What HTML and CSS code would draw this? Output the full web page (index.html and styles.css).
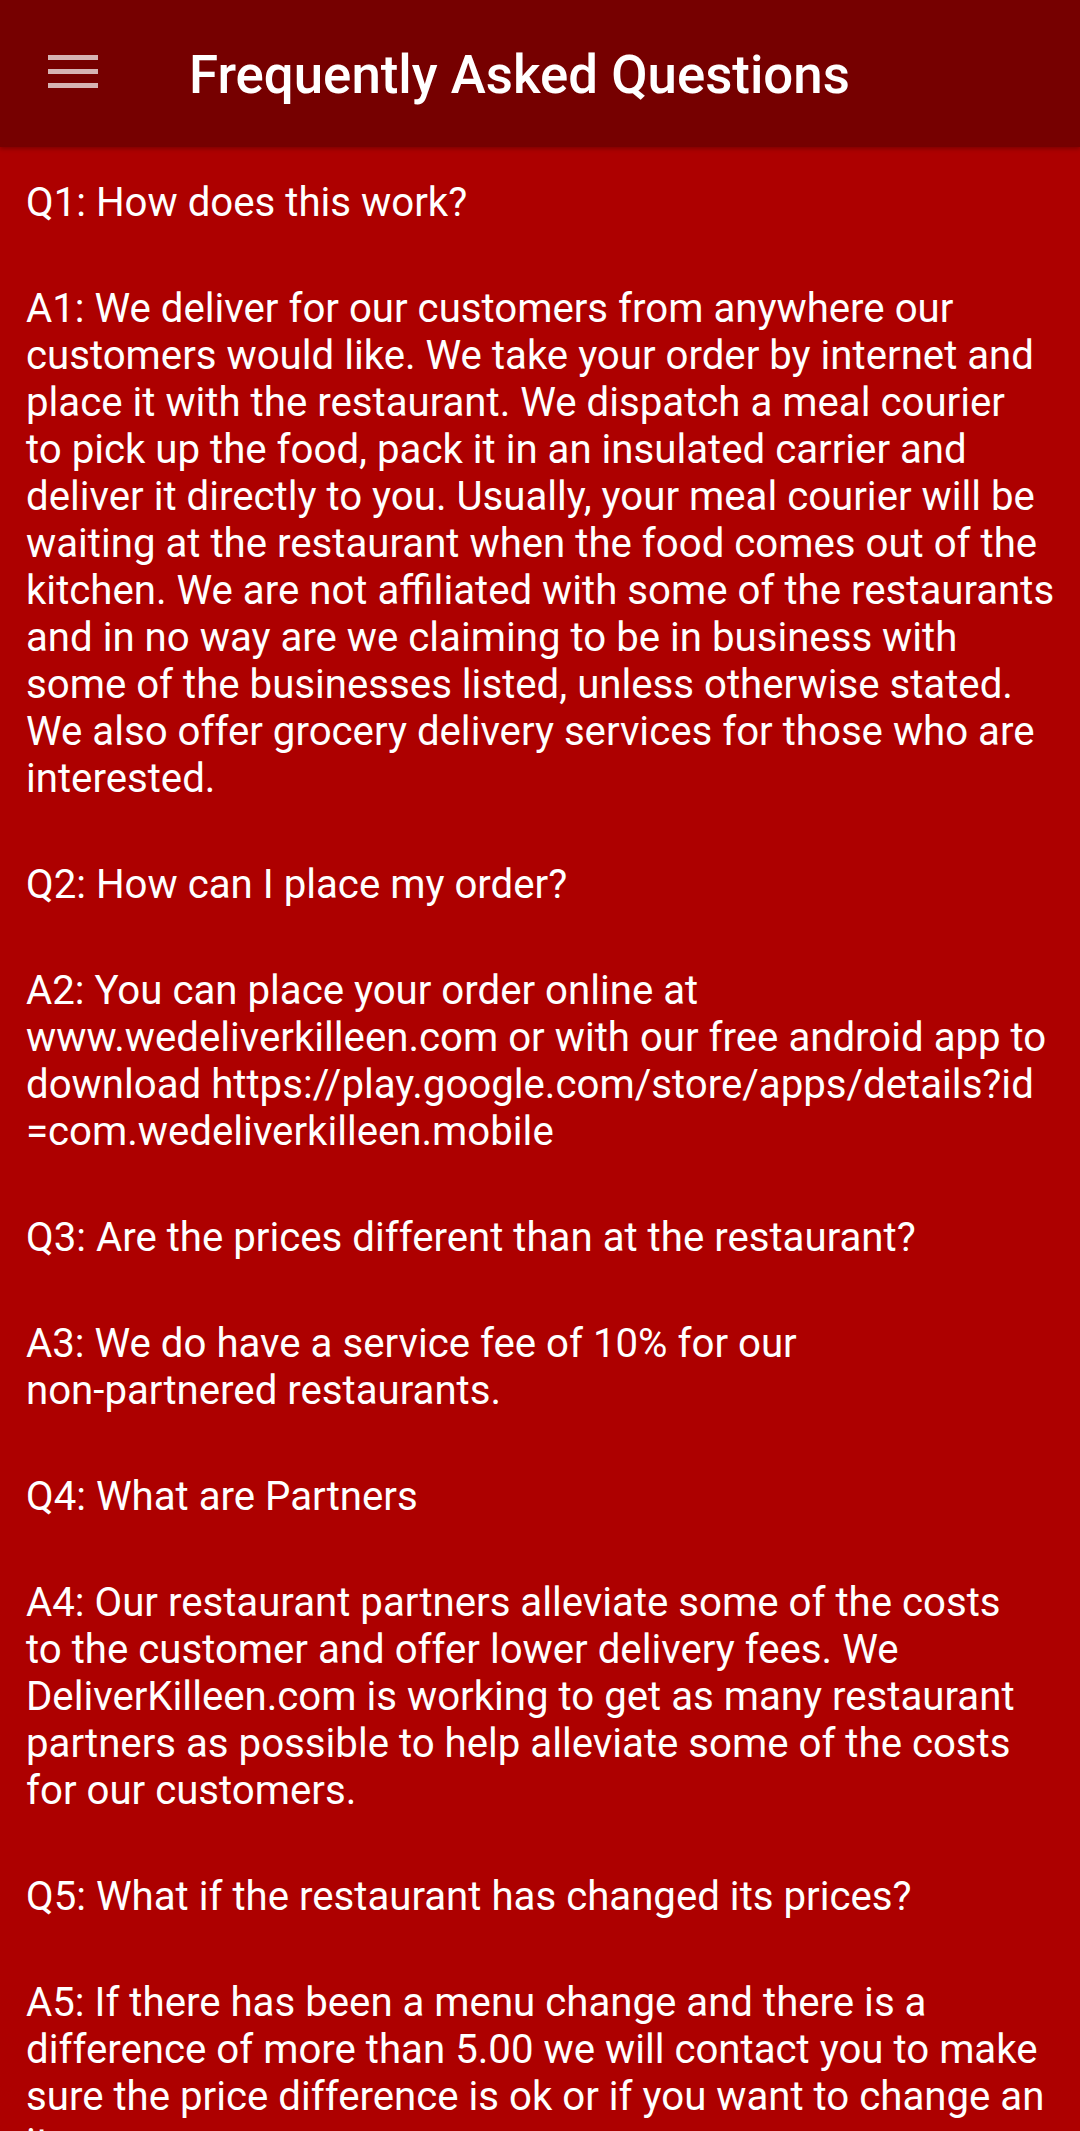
FILE: index.html
```html
<!DOCTYPE html>
<html lang="en">
<head>
<meta charset="utf-8">
<title>Frequently Asked Questions</title>
<link rel="stylesheet" href="styles.css">
</head>
<body>
<header class="toolbar">
  <button class="nav-btn" aria-label="Menu">
    <svg class="menu-icon" width="50" height="34" viewBox="0 0 50 34">
      <rect x="0" y="0" width="50" height="5"/>
      <rect x="0" y="14" width="50" height="5"/>
      <rect x="0" y="28" width="50" height="5"/>
    </svg>
  </button>
  <h1 class="title">Frequently Asked Questions</h1>
</header>
<main class="faq">
  <p class="item">Q1: How does this work?</p>
  <p class="item">A1: We deliver for our customers from anywhere our<br>customers would like. We take your order by internet and<br>place it with the restaurant. We dispatch a meal courier<br>to pick up the food, pack it in an insulated carrier and<br>deliver it directly to you. Usually, your meal courier will be<br>waiting at the restaurant when the food comes out of the<br>kitchen. We are not affiliated with some of the restaurants<br>and in no way are we claiming to be in business with<br>some of the businesses listed, unless otherwise stated.<br>We also offer grocery delivery services for those who are<br>interested.</p>
  <p class="item">Q2: How can I place my order?</p>
  <p class="item">A2: You can place your order online at<br>www.wedeliverkilleen.com or with our free android app to<br>download https://play.google.com/store/apps/details?id<br>=com.wedeliverkilleen.mobile</p>
  <p class="item">Q3: Are the prices different than at the restaurant?</p>
  <p class="item">A3: We do have a service fee of 10% for our<br>non-partnered restaurants.</p>
  <p class="item">Q4: What are Partners</p>
  <p class="item">A4: Our restaurant partners alleviate some of the costs<br>to the customer and offer lower delivery fees. We<br>DeliverKilleen.com is working to get as many restaurant<br>partners as possible to help alleviate some of the costs<br>for our customers.</p>
  <p class="item">Q5: What if the restaurant has changed its prices?</p>
  <p class="item">A5: If there has been a menu change and there is a<br>difference of more than 5.00 we will contact you to make<br>sure the price difference is ok or if you want to change an<br>item.</p>
</main>
</body>
</html>
```

FILE: styles.css
```css
html, body {
  margin: 0;
  padding: 0;
}
body {
  background: #ad0000;
  font-family: Roboto, "Liberation Sans", sans-serif;
  color: #ffffff;
  width: 1080px;
  overflow: hidden;
}
.toolbar {
  height: 147px;
  background: #760000;
  display: flex;
  align-items: center;
  box-shadow: 0 2px 4px rgba(0, 0, 0, 0.25);
  position: relative;
}
.nav-btn {
  width: 189px;
  height: 147px;
  padding: 0 0 0 48px;
  margin: 0;
  border: 0;
  background: transparent;
  display: flex;
  align-items: center;
  justify-content: flex-start;
  box-sizing: border-box;
}
.menu-icon {
  display: block;
  fill: rgba(255, 255, 255, 0.7);
  margin-top: -4px;
}
.title {
  margin: 0;
  font-size: 52.8px;
  font-weight: 500;
  line-height: 62px;
  margin-top: 2px;
  white-space: nowrap;
}
.faq {
  padding: 32px 26px 0 26px;
}
.item {
  margin: 0 0 59px 0;
  font-size: 40.2px;
  line-height: 47px;
  white-space: nowrap;
}
```
